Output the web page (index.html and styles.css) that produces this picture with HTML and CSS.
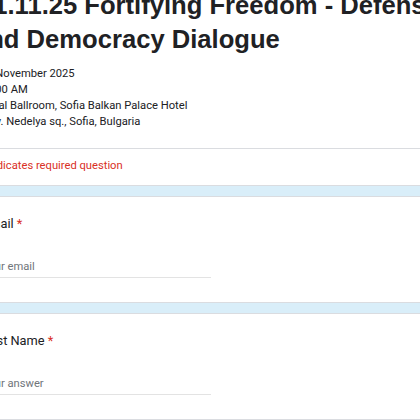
FILE: index.html
```html
<!DOCTYPE html>
<html>
<head>
<meta charset="utf-8">
<link rel="stylesheet" href="styles.css">
</head>
<body>
<div class="form">
  <div class="card">
    <div class="header-main">
      <h1 class="title">21.11.25 Fortifying Freedom - Defense and Democracy Dialogue</h1>
      <div class="desc">
        <div>21 November 2025</div>
        <div>10:00 AM</div>
        <div>Royal Ballroom, Sofia Balkan Palace Hotel</div>
        <div>5 Sv. Nedelya sq., Sofia, Bulgaria</div>
      </div>
    </div>
    <div class="required">* Indicates required question</div>
  </div>
  <div class="card question">
    <div class="q-title">Email <span class="star">*</span></div>
    <div class="input">Your email</div>
  </div>
  <div class="card question">
    <div class="q-title">First Name <span class="star">*</span></div>
    <div class="input">Your answer</div>
  </div>
</div>
</body>
</html>
```

FILE: styles.css
```css
html, body {
  margin: 0;
  padding: 0;
}
body {
  background: #d9eef9;
  overflow: hidden;
  font-family: Roboto, "Liberation Sans", Arial, sans-serif;
  color: #202124;
}
.form {
  margin: -13px 0 0 -37px;
  width: 480px;
  display: flex;
  flex-direction: column;
  gap: 10px;
}
.card {
  background: #fff;
  border: 1px solid #dadce0;
}
.header-main {
  padding: 0 18px 18px 18px;
  border-bottom: 1px solid #dadce0;
}
.title {
  margin: 0 0 0 -8px;
  text-indent: 5px;
  font-family: "Liberation Sans", Arial, sans-serif;
  font-weight: bold;
  font-size: 25.6px;
  line-height: 34px;
  color: #202124;
  width: 470px;
}
.desc {
  margin-top: 10px;
  margin-left: -2px;
  font-size: 11.2px;
  line-height: 16px;
  color: #202124;
}
.required {
  padding: 9px 18px 11px 16px;
  font-size: 11.2px;
  line-height: 16px;
  color: #d93025;
}
.question {
  padding: 19px 18px 24px 18px;
}
.q-title {
  font-size: 12.8px;
  line-height: 16px;
  color: #202124;
}
.star {
  color: #d93025;
}
.input {
  margin-top: 27px;
  width: 229px;
  padding-bottom: 2px;
  border-bottom: 1px solid #e3e3e3;
  font-size: 11.2px;
  line-height: 16px;
  color: #70757a;
}
```
